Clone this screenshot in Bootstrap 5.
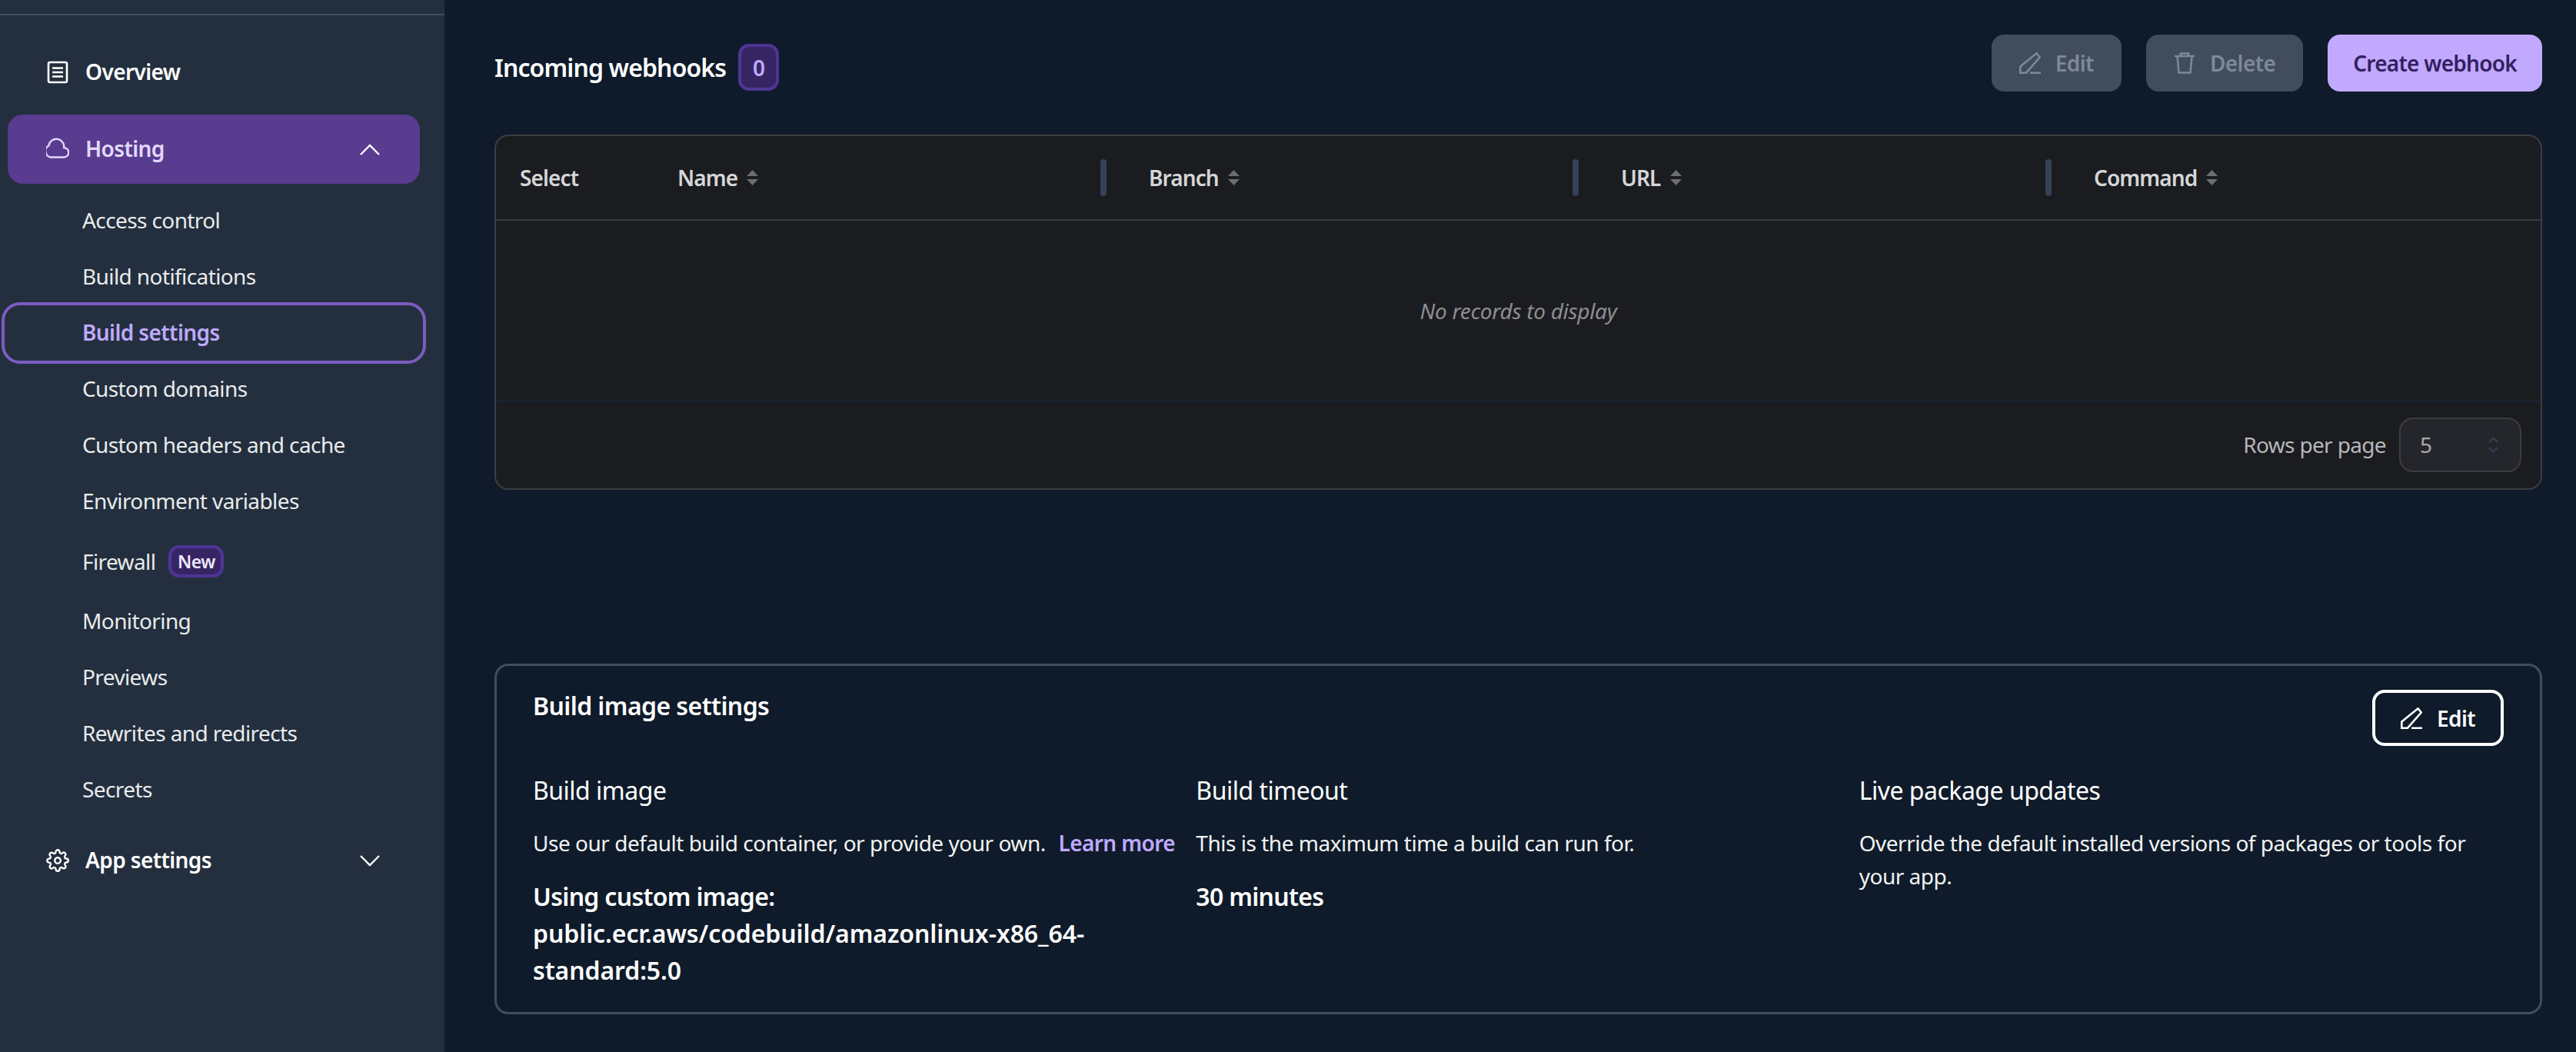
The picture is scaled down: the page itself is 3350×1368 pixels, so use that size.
<!doctype html>
<html lang="en" data-bs-theme="dark">
<head>
<meta charset="utf-8">
<title>Build settings</title>
<link rel="stylesheet" href="https://cdn.jsdelivr.net/npm/bootstrap@5.3.0/dist/css/bootstrap.min.css">
<style>
html,body{height:1368px;overflow:hidden}
body{background:#0f1b2a;color:#fff;font-family:"Noto Sans","Open Sans",sans-serif;font-size:28px;line-height:42px;letter-spacing:-.55px}
.shell{height:1368px}
.side{width:578px;flex:none;background:#232f3e;color:#e9ebed}
.side-rule{height:2px;margin-top:18px;background:#414d5c}
.nav-top{height:90px;margin-left:10px;width:536px;padding-left:50px;padding-right:52px;border-radius:20px;font-weight:600;color:#fff;letter-spacing:-.6px}
.nav-top>span{padding-bottom:2px}
.nav-top svg.lead-ic{width:30px;height:30px;margin-right:21px;flex:none}
.nav-top svg.chev{width:26px;height:15px}
.nav-first{margin-top:29px}
.nav-open{background:#593c8f;color:#e2d9fb;margin-top:10px;margin-bottom:0}
.nav-open svg.chev{color:#fff}
.subs{margin-top:12px}
.sub-item{height:73px;padding-left:107px;padding-bottom:3px;color:#e9ebed;display:flex;align-items:center;gap:17px;letter-spacing:-.6px}
.sub-item.tall{height:83px;padding-bottom:1px}
.sub-item.cur{color:#bfa9ff;font-weight:600;position:relative}
.sub-item.cur::after{content:"";position:absolute;left:2px;width:552px;top:-4px;height:80px;border:4px solid #7d5cc1;border-radius:24px}
.tag-new{width:72px;height:42px;font-size:23px;font-weight:600;border:4px solid #4f3596;background:#372563;border-radius:14px;color:#eee9fd}
.nav-last{margin-top:10px;height:90px}
.mainpane{padding:45px 44px 0 65px}
.head-title{font-size:32px;font-weight:600;line-height:48px;margin-right:16px;letter-spacing:-.9px}
.count{width:53px;height:61px;border:4px solid #4f3596;background:#372563;border-radius:14px;color:#bfa9ff;font-size:28px;font-weight:600}
.head-left{margin-top:12px}
.head-row{height:74px;margin-bottom:56px}
.head-btns{gap:32px}
.act{height:74px;border-radius:16px;font-size:28px;font-weight:600;padding:0 36px;display:inline-flex;align-items:center;gap:19px;border:0;line-height:1;letter-spacing:-.6px}
.act svg{width:28px;height:28px}
.btn.act-off:disabled{background:#414d5c;color:#7d8998;opacity:1}
.act-main{background:#c1a9ff;color:#33205f;padding:0 33px;letter-spacing:-.75px}
.act-main:hover{background:#c1a9ff;color:#33205f}
.act-line{height:73px;padding:0 33px;background:transparent;border:4px solid #fff;color:#fff}
.grid-box{height:462px;background:#1b1c1f;border:2px solid #3c3d42;border-radius:18px;overflow:hidden;color:#d5d6d8}
.grid-head{height:110px;border-bottom:2px solid #3c3d42;display:grid;grid-template-columns:205px 613px 614px 615px 1fr;font-weight:600;letter-spacing:-.9px}
.gcell{display:flex;align-items:center;justify-content:space-between;padding-left:31px;padding-right:24px}
.gcell>span{display:inline-flex;align-items:center;gap:12px}
.sort{width:15px;height:20px}
.grip{width:8px;height:48px;border-radius:4px;background:#354157}
.grid-body{height:236px;padding-top:96px;border-bottom:2px solid #1a2433;font-style:italic;color:#8d8e92;text-align:center;letter-spacing:-.3px}
.grid-foot{height:110px;padding-right:25px;gap:17px;color:#b6b7ba;letter-spacing:-.65px}
.pick{width:159px;height:71px;border:2px solid #3c3d42;background:#25262b;border-radius:18px;padding:0 28px 0 25px;color:#a9aaae}
.pick svg{width:13px;height:21px}
.set-box{margin-top:226px;height:456px;border:3px solid #414d5c;border-radius:18px;padding:31px 47px 0 47px}
.set-title{font-size:32px;font-weight:600;line-height:42px;letter-spacing:-.6px}
.set-cols{display:grid;grid-template-columns:repeat(3,1fr);gap:24px;margin-top:34px}
.set-h{font-size:32px;line-height:48px;margin-bottom:23px;letter-spacing:-.5px}
.set-d{line-height:43px;margin-bottom:24px;color:#f2f3f3;letter-spacing:-.48px}
.set-v{font-size:32px;line-height:48px;font-weight:600;letter-spacing:-.7px}
.url-line{letter-spacing:-.1px}
.more{color:#bfa9ff;font-weight:600;text-decoration:none;margin-left:10px;letter-spacing:-.6px}
</style>
</head>
<body>
<div class="shell d-flex">
  <aside class="side d-flex flex-column">
    <div class="side-rule"></div>
    <div class="nav-top nav-first d-flex align-items-center">
      <svg class="lead-ic" viewBox="0 0 30 30" fill="none" stroke="currentColor" stroke-width="2.6"><rect x="3" y="2" width="24" height="26" rx="2"/><path d="M8 9.5h14M8 15h14M8 20.5h14"/></svg>
      <span>Overview</span>
    </div>
    <div class="nav-top nav-open d-flex align-items-center">
      <svg class="lead-ic" viewBox="0 0 30 30" fill="none" stroke="currentColor" stroke-width="2.4"><path d="M8 25.500H23a6.200 6.200 0 0 0 .2-12.400A9 9 0 0 0 3.400 10.500 8 8 0 0 0 8 25.500Z"/></svg>
      <span class="flex-grow-1">Hosting</span>
      <svg class="chev" viewBox="0 0 26 15" fill="none" stroke="currentColor" stroke-width="2.4"><path d="M1 14 13 2l12 12"/></svg>
    </div>
    <div class="subs">
      <div class="sub-item">Access control</div>
      <div class="sub-item">Build notifications</div>
      <div class="sub-item cur">Build settings</div>
      <div class="sub-item">Custom domains</div>
      <div class="sub-item">Custom headers and cache</div>
      <div class="sub-item">Environment variables</div>
      <div class="sub-item tall"><span>Firewall</span><span class="tag-new d-inline-flex align-items-center justify-content-center">New</span></div>
      <div class="sub-item">Monitoring</div>
      <div class="sub-item">Previews</div>
      <div class="sub-item">Rewrites and redirects</div>
      <div class="sub-item">Secrets</div>
    </div>
    <div class="nav-top nav-last d-flex align-items-center">
      <svg class="lead-ic" viewBox="0 0 24 24" fill="none" stroke="currentColor" stroke-width="1.9"><circle cx="12" cy="12" r="3"/><path d="M19.4 15a1.65 1.65 0 0 0 .33 1.82l.06.06a2 2 0 0 1 0 2.83 2 2 0 0 1-2.83 0l-.06-.06a1.65 1.65 0 0 0-1.82-.33 1.65 1.65 0 0 0-1 1.51V21a2 2 0 0 1-2 2 2 2 0 0 1-2-2v-.09A1.65 1.65 0 0 0 9 19.4a1.65 1.65 0 0 0-1.82.33l-.06.06a2 2 0 0 1-2.83 0 2 2 0 0 1 0-2.83l.06-.06a1.65 1.65 0 0 0 .33-1.82 1.65 1.65 0 0 0-1.51-1H3a2 2 0 0 1-2-2 2 2 0 0 1 2-2h.09A1.65 1.65 0 0 0 4.6 9a1.65 1.65 0 0 0-.33-1.82l-.06-.06a2 2 0 0 1 0-2.83 2 2 0 0 1 2.83 0l.06.06a1.65 1.65 0 0 0 1.82.33H9a1.65 1.65 0 0 0 1-1.51V3a2 2 0 0 1 2-2 2 2 0 0 1 2 2v.09a1.65 1.65 0 0 0 1 1.51 1.65 1.65 0 0 0 1.82-.33l.06-.06a2 2 0 0 1 2.83 0 2 2 0 0 1 0 2.83l-.06.06a1.65 1.65 0 0 0-.33 1.82V9a1.65 1.65 0 0 0 1.51 1H21a2 2 0 0 1 2 2 2 2 0 0 1-2 2h-.09a1.65 1.65 0 0 0-1.51 1z"/></svg>
      <span class="flex-grow-1">App settings</span>
      <svg class="chev" viewBox="0 0 26 15" fill="none" stroke="currentColor" stroke-width="2.4"><path d="M1 1l12 12L25 1"/></svg>
    </div>
  </aside>
  <main class="mainpane flex-grow-1">
    <div class="head-row d-flex align-items-start justify-content-between">
      <div class="head-left d-flex align-items-center">
        <span class="head-title">Incoming webhooks</span>
        <span class="count d-flex align-items-center justify-content-center">0</span>
      </div>
      <div class="head-btns d-flex">
        <button class="btn act act-off" disabled>
          <svg viewBox="0 0 28 28" fill="none" stroke="currentColor" stroke-width="2.6"><path d="M1.300 18.500 22.500 1.300l4.200 5.200L9 26.700H1.300zM14 26.700h14"/></svg>Edit</button>
        <button class="btn act act-off" disabled>
          <svg viewBox="0 0 28 28" fill="none" stroke="currentColor" stroke-width="2.6"><path d="M1 5h26M9 5V1.500h10V5M4.500 5l2 21.500h15L23.500 5"/></svg>Delete</button>
        <button class="btn act act-main">Create webhook</button>
      </div>
    </div>
    <section class="grid-box">
      <div class="grid-head">
        <div class="gcell"><span>Select</span></div>
        <div class="gcell"><span>Name <svg class="sort" viewBox="0 0 15 20" fill="#6c6d71"><path d="M7.500 0 15 8H0zM0 12h15l-7.500 8z"/></svg></span><i class="grip"></i></div>
        <div class="gcell"><span>Branch <svg class="sort" viewBox="0 0 15 20" fill="#6c6d71"><path d="M7.500 0 15 8H0zM0 12h15l-7.500 8z"/></svg></span><i class="grip"></i></div>
        <div class="gcell"><span>URL <svg class="sort" viewBox="0 0 15 20" fill="#6c6d71"><path d="M7.500 0 15 8H0zM0 12h15l-7.500 8z"/></svg></span><i class="grip"></i></div>
        <div class="gcell"><span>Command <svg class="sort" viewBox="0 0 15 20" fill="#6c6d71"><path d="M7.500 0 15 8H0zM0 12h15l-7.500 8z"/></svg></span></div>
      </div>
      <div class="grid-body">No records to display</div>
      <div class="grid-foot d-flex align-items-center justify-content-end">
        <span>Rows per page</span>
        <div class="pick d-flex align-items-center justify-content-between"><span>5</span>
          <svg viewBox="0 0 13 21" fill="none" stroke="#33415a" stroke-width="1.8"><path d="M1 7l5.500-5.500L12 7M1 14l5.500 5.500L12 14"/></svg></div>
      </div>
    </section>
    <section class="set-box">
      <div class="d-flex justify-content-between align-items-start">
        <div class="set-title">Build image settings</div>
        <button class="btn act act-line"><svg viewBox="0 0 28 28" fill="none" stroke="currentColor" stroke-width="2.6"><path d="M1.300 18.500 22.500 1.300l4.200 5.200L9 26.700H1.300zM14 26.700h14"/></svg>Edit</button>
      </div>
      <div class="set-cols">
        <div>
          <div class="set-h">Build image</div>
          <div class="set-d">Use our default build container, or provide your own. <a href="#" class="more">Learn more</a></div>
          <div class="set-v">Using custom image:<br><span class="url-line">public.ecr.aws/codebuild/amazonlinux-x86_64-standard:5.0</span></div>
        </div>
        <div>
          <div class="set-h">Build timeout</div>
          <div class="set-d">This is the maximum time a build can run for.</div>
          <div class="set-v">30 minutes</div>
        </div>
        <div>
          <div class="set-h">Live package updates</div>
          <div class="set-d">Override the default installed versions of packages or tools for your app.</div>
        </div>
      </div>
    </section>
  </main>
</div>
<script src="https://cdn.jsdelivr.net/npm/bootstrap@5.3.0/dist/js/bootstrap.bundle.min.js"></script>
</body>
</html>
